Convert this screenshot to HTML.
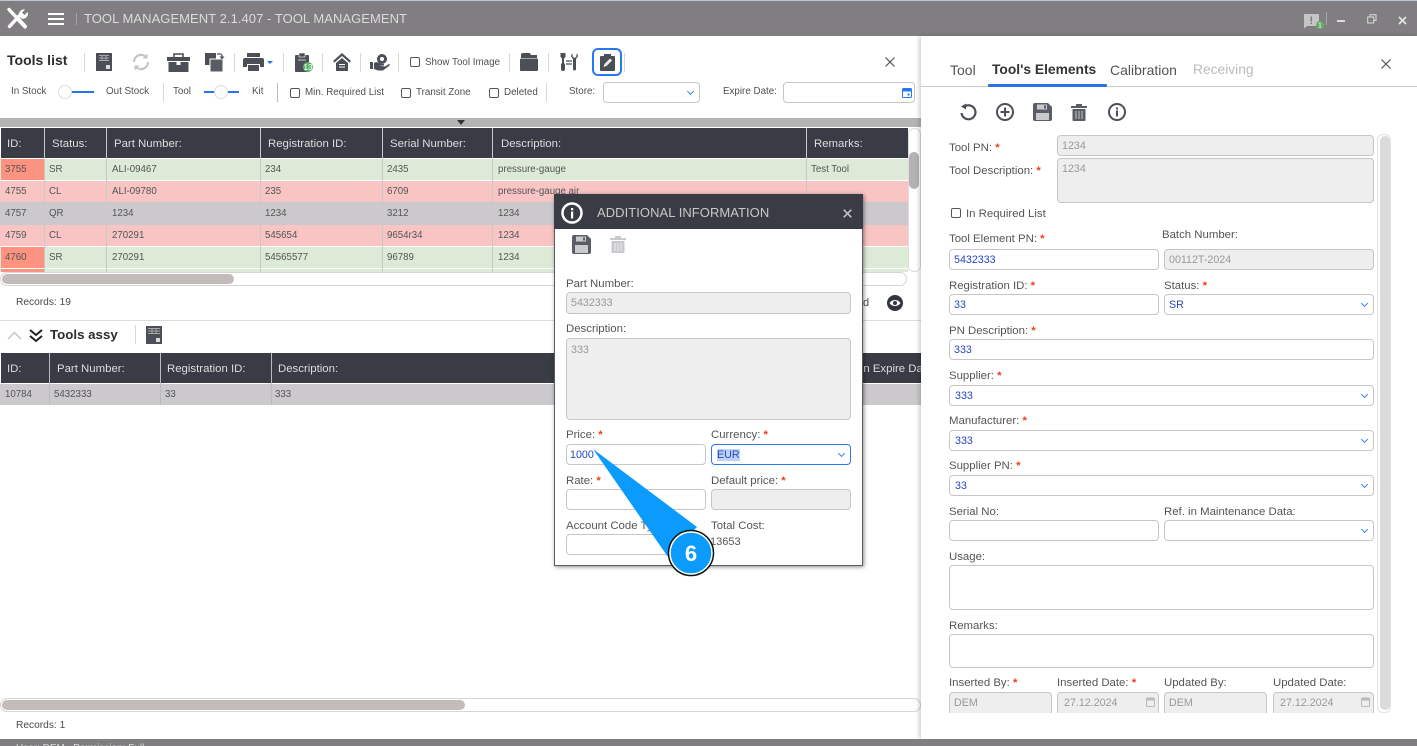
<!DOCTYPE html>
<html><head><meta charset="utf-8"><title>Tool Management</title>
<style>
html,body{margin:0;padding:0;width:1417px;height:746px;overflow:hidden;background:#fff}
body{font-family:"Liberation Sans",sans-serif;font-size:11px;color:#4a4a4a;position:relative}
div,span,svg{box-sizing:border-box}
.a{position:absolute}
.t{position:absolute;line-height:14px;white-space:nowrap}
.tb{font-size:9.800px;color:#505050}
.l{font-size:11.400px;color:#555;margin-top:1px}
.l b,.s{color:#f5391c;font-weight:bold}
.f{position:absolute;background:#fff;border:1px solid #c9c5c7;border-radius:4px;font-size:10.700px;color:#2646c4;padding:1px 4px 0;line-height:19px;white-space:nowrap}
.d{background:#eee;color:#999}
.c:after{content:"";position:absolute;right:6px;top:6px;width:4px;height:4px;border-right:1.500px solid #3b82f0;border-bottom:1.500px solid #3b82f0;transform:rotate(45deg)}
.sep{position:absolute;width:1px;background:#d8d8d8}
.cb{position:absolute;width:10px;height:10px;border:1.300px solid #555;border-radius:2px;background:#fff}
.h{position:absolute;background:#393c45;color:#ddd;font-size:11.400px}
.h span{position:absolute;line-height:14px;white-space:nowrap;margin-top:1px}
.r span{position:absolute;line-height:14px;white-space:nowrap}
.r{position:absolute;left:0;font-size:9.700px;color:#555}
.vl{position:absolute;width:1px}
svg{position:absolute;overflow:visible}
</style></head><body>

<!-- title bar -->
<div class="a" style="left:0;top:0;width:1417px;height:36px;background:#807e80;border-top:1px solid #b9c8d8"></div>
<svg style="left:6px;top:8px" width="22" height="22" viewBox="0 0 22 22"><path d="M3 1.500 L11 10 M14 7 L3.500 18.500" stroke="#fff" stroke-width="3.400" stroke-linecap="round" fill="none"/><path d="M13 6.500a5 5 0 0 1 6-5l-3 3 2.500 2.500 3-3a5 5 0 0 1-6.500 6.500z" fill="#fff"/><path d="M12 11l7 7.500" stroke="#fff" stroke-width="4" stroke-linecap="round"/></svg>
<div class="a" style="left:48px;top:13px;width:16px;height:2px;background:#fff"></div>
<div class="a" style="left:48px;top:18px;width:16px;height:2px;background:#fff"></div>
<div class="a" style="left:48px;top:23px;width:16px;height:2px;background:#fff"></div>
<div class="a" style="left:76px;top:13px;width:1px;height:12px;background:#a5a3a5"></div>
<div class="t" style="left:84px;top:12px;font-size:13px;color:#dcdcdc;letter-spacing:.05px">TOOL MANAGEMENT 2.1.407 - TOOL MANAGEMENT</div>
<svg style="left:1302px;top:13px" width="24" height="17" viewBox="0 0 24 17"><path d="M2 1h14a1 1 0 0 1 1 1v10a1 1 0 0 1-1 1H5l-3 2.500z" fill="#c6c5c6"/><rect x="8.500" y="3.500" width="1.500" height="5" fill="#807e80"/><rect x="8.500" y="9.500" width="1.500" height="1.500" fill="#807e80"/><circle cx="18" cy="12" r="4" fill="#6aa96a"/><text x="18" y="14.500" font-size="7" fill="#fff" text-anchor="middle" font-family="Liberation Sans">1</text></svg>
<div class="a" style="left:1326px;top:12px;width:1px;height:13px;background:#a5a3a5"></div>
<div class="a" style="left:1337px;top:20px;width:8px;height:2px;background:#dcdcdc"></div>
<svg style="left:1367px;top:14px" width="10" height="10" viewBox="0 0 10 10"><path d="M3 2.500V.7h6v5.800H7M.7 3h6v6h-6z" fill="none" stroke="#dcdcdc" stroke-width="1"/></svg>
<svg style="left:1398px;top:16px" width="9" height="9" viewBox="0 0 9 9"><path d="M1 1l7 7M8 1l-7 7" stroke="#e6e6e6" stroke-width="1.600"/></svg>

<!-- left panel -->
<div class="a" style="left:0;top:36px;width:921px;height:703px;overflow:hidden;background:#fff">
<div class="a" style="left:0;top:-36px;width:921px;height:746px">

<div class="t" style="left:7px;top:53px;font-size:14px;font-weight:bold;color:#2c2c2c">Tools list</div>
<div class="sep" style="left:84px;top:53px;height:19px"></div>
<svg style="left:96px;top:53px" width="16" height="18" viewBox="0 0 16 18"><rect width="16" height="18" fill="#4c4f57"/><path d="M3 2.500h10M3 5h10M3 7.500h10M6 2v6M10 2v6" stroke="#aaa" stroke-width="1"/><rect x="10" y="12" width="4" height="4" fill="#ddd"/></svg>
<svg style="left:131px;top:52px" width="20" height="20" viewBox="0 0 20 20"><path d="M3 10a7 7 0 0 1 12-5M17 10a7 7 0 0 1-12 5" fill="none" stroke="#c4c4c4" stroke-width="2.200"/><path d="M16.500 1.500v5h-5zM3.500 18.500v-5h5z" fill="#c4c4c4"/></svg>
<svg style="left:167px;top:53px" width="23" height="19" viewBox="0 0 23 19"><path d="M7 4V1h9v3" fill="none" stroke="#4c4f57" stroke-width="1.600"/><rect y="4" width="23" height="4" fill="#4c4f57"/><rect x="1.500" y="9" width="20" height="10" fill="#4c4f57"/><rect x="9.500" y="8" width="4" height="4" fill="#fff"/></svg>
<svg style="left:205px;top:52px" width="20" height="20" viewBox="0 0 20 20"><rect y="1" width="11" height="12" fill="#4c4f57"/><rect x="5" y="7" width="13" height="13" fill="#5a5d65" stroke="#fff"/><path d="M12 2h3a2 2 0 0 1 2 2v1" fill="none" stroke="#4c4f57" stroke-width="1.300"/><path d="M14.500 4.500h5l-2.500 3z" fill="#4c4f57"/></svg>
<div class="sep" style="left:234px;top:53px;height:19px"></div>
<svg style="left:243px;top:53px" width="32" height="19" viewBox="0 0 32 19"><rect x="4" y="0" width="13" height="4" fill="#4c4f57"/><path d="M2 5h17a2 2 0 0 1 2 2v7h-4v-3H4v3H0V7a2 2 0 0 1 2-2z" fill="#4c4f57"/><rect x="5" y="12" width="11" height="6" fill="#4c4f57"/><path d="M24 8h6l-3 3z" fill="#2a72e8"/></svg>
<div class="sep" style="left:283px;top:53px;height:19px"></div>
<svg style="left:295px;top:52px" width="20" height="20" viewBox="0 0 20 20"><rect y="3" width="14" height="17" rx="1" fill="#4c4f57"/><rect x="4" y="1" width="6" height="4" fill="#4c4f57" stroke="#fff" stroke-width=".6"/><rect x="3" y="7" width="8" height="2" fill="#8a8c92"/><circle cx="13" cy="15" r="5" fill="#5cb56a"/><text x="13" y="18" font-size="8" fill="#fff" text-anchor="middle" font-family="Liberation Sans">13</text></svg>
<div class="sep" style="left:322px;top:53px;height:19px"></div>
<svg style="left:333px;top:53px" width="18" height="18" viewBox="0 0 18 18"><path d="M9 0L0 8l1.500 1.500L9 3l7.500 6.500L18 8z" fill="#4c4f57"/><path d="M3 10l6-5 6 5v8H3z" fill="#4c4f57"/><path d="M6 11.500h6M6 14h6" stroke="#fff"/></svg>
<div class="sep" style="left:360px;top:53px;height:19px"></div>
<svg style="left:370px;top:53px" width="20" height="18" viewBox="0 0 20 18"><circle cx="12" cy="6" r="5" fill="#4c4f57"/><circle cx="12" cy="6" r="2" fill="#fff"/><rect x="0" y="9" width="3" height="7" fill="#4c4f57"/><path d="M4 10c3-2 5 0 7 1h3v1.500H9l6 1 4-2.500c1 0 1 1 0 2l-6 4.500H8l-4-1.500z" fill="#4c4f57"/></svg>
<div class="sep" style="left:398px;top:53px;height:19px"></div>
<div class="cb" style="left:410px;top:57px"></div>
<div class="t tb" style="left:425px;top:56px">Show Tool Image</div>
<div class="sep" style="left:509px;top:53px;height:19px"></div>
<svg style="left:520px;top:53px" width="18" height="18" viewBox="0 0 18 18"><path d="M3 0h7l1 2h6v3H1V2a2 2 0 0 1 2-2z" fill="#4c4f57"/><path d="M1 5.500h16a1 1 0 0 1 1 1V17a1 1 0 0 1-1 1H1a1 1 0 0 1-1-1V6.500a1 1 0 0 1 1-1z" fill="#4c4f57"/></svg>
<div class="sep" style="left:548px;top:53px;height:19px"></div>
<svg style="left:559px;top:52px" width="20" height="20" viewBox="0 0 20 20"><path d="M1.500 1v4l1.500 1.500V11l-1 1v5a2 2 0 0 0 4 0v-5l-1-1V6.500L6.500 5V1" fill="#4c4f57"/><path d="M13.500 1.500v3l2 1.500 2-1.500v-3a3.500 3.500 0 0 1 1.500 3L17 7v10a1.500 1.500 0 0 1-3 0V7l-2-2.500a3.500 3.500 0 0 1 1.500-3z" fill="#4c4f57"/><path d="M7 9h6M7 12h6" stroke="#4c4f57" stroke-width="1.200"/></svg>
<div class="a" style="left:592px;top:48px;width:30px;height:28px;border:2px solid #2a78f0;border-radius:6px;background:#fff"></div>
<svg style="left:600px;top:54px" width="15" height="17" viewBox="0 0 15 17"><rect y="2" width="15" height="15" rx="1" fill="#4c4f57"/><rect x="4" y="0" width="7" height="4" fill="#4c4f57"/><path d="M3.500 13l1-3 5.500-5.500 2 2L6.500 12z" fill="#eee"/></svg>
<div class="sep" style="left:624px;top:53px;height:19px"></div>
<svg style="left:885px;top:57px" width="10" height="10" viewBox="0 0 10 10"><path d="M.5.500l9 9M9.500.500l-9 9" stroke="#555" stroke-width="1.200"/></svg>

<div class="t tb" style="left:11px;top:85px">In Stock</div>
<div class="a" style="left:65px;top:91px;width:29px;height:2px;background:#2a72e8"></div>
<div class="a" style="left:58px;top:85px;width:14px;height:14px;border-radius:50%;background:#fff;border:1px solid #ddd"></div>
<div class="t tb" style="left:106px;top:85px">Out Stock</div>
<div class="sep" style="left:163px;top:83px;height:19px"></div>
<div class="t tb" style="left:173px;top:85px">Tool</div>
<div class="a" style="left:204px;top:91px;width:35px;height:2px;background:#2a72e8"></div>
<div class="a" style="left:214px;top:85px;width:14px;height:14px;border-radius:50%;background:#fff;border:1px solid #ddd"></div>
<div class="t tb" style="left:252px;top:85px">Kit</div>
<div class="sep" style="left:277px;top:83px;height:19px;background:#bbb"></div>
<div class="cb" style="left:290px;top:88px"></div>
<div class="t tb" style="left:305px;top:86px">Min. Required List</div>
<div class="cb" style="left:401px;top:88px"></div>
<div class="t tb" style="left:416px;top:86px">Transit Zone</div>
<div class="cb" style="left:489px;top:88px"></div>
<div class="t tb" style="left:504px;top:86px">Deleted</div>
<div class="sep" style="left:546px;top:83px;height:19px"></div>
<div class="t tb" style="left:569px;top:85px">Store:</div>
<div class="f c" style="left:603px;top:82px;width:97px;height:21px"></div>
<div class="t tb" style="left:723px;top:85px">Expire Date:</div>
<div class="f" style="left:783px;top:82px;width:132px;height:21px"></div>
<svg style="left:902px;top:87px" width="10" height="11" viewBox="0 0 10 11"><rect x=".5" y="1.500" width="9" height="9" rx="1" fill="none" stroke="#2a78f0"/><rect x=".5" y="1.500" width="9" height="3" fill="#2a78f0"/><rect x="5.500" y="6.500" width="2" height="2" fill="#2a78f0"/></svg>

<div class="a" style="left:0;top:118px;width:921px;height:9px;background:#b4b4b4"></div>
<svg style="left:457px;top:120px" width="8" height="5" viewBox="0 0 8 5"><path d="M0 0h8L4 5z" fill="#333"/></svg>

<!-- grid 1 -->
<div class="h" style="left:1px;top:128px;width:907px;height:30px">
<span style="left:6px;top:8px">ID:</span><span style="left:51px;top:8px">Status:</span><span style="left:113px;top:8px">Part Number:</span><span style="left:267px;top:8px">Registration ID:</span><span style="left:389px;top:8px">Serial Number:</span><span style="left:500px;top:8px">Description:</span><span style="left:813px;top:8px">Remarks:</span></div>
<div class="r" style="top:159px;width:908px;height:21px;background:#deead8"><span style="left:49px;top:4px">SR</span><span style="left:112px;top:4px">ALI-09467</span><span style="left:265px;top:4px">234</span><span style="left:387px;top:4px">2435</span><span style="left:498px;top:4px">pressure-gauge</span><span style="left:811px;top:4px">Test Tool</span></div>
<div class="r" style="top:181px;width:908px;height:21px;background:#f8c4c4"><span style="left:49px;top:4px">CL</span><span style="left:112px;top:4px">ALI-09780</span><span style="left:265px;top:4px">235</span><span style="left:387px;top:4px">6709</span><span style="left:498px;top:4px">pressure-gauge air</span></div>
<div class="r" style="top:202px;width:908px;height:23px;background:#cbc9cc"><span style="left:5px;top:5px">4757</span><span style="left:49px;top:5px">QR</span><span style="left:112px;top:5px">1234</span><span style="left:265px;top:5px">1234</span><span style="left:387px;top:5px">3212</span><span style="left:498px;top:5px">1234</span></div>
<div class="r" style="top:225px;width:908px;height:21px;background:#f8c4c4"><span style="left:5px;top:4px">4759</span><span style="left:49px;top:4px">CL</span><span style="left:112px;top:4px">270291</span><span style="left:265px;top:4px">545654</span><span style="left:387px;top:4px">9654r34</span><span style="left:498px;top:4px">1234</span></div>
<div class="r" style="top:247px;width:908px;height:21px;background:#deead8"><span style="left:49px;top:4px">SR</span><span style="left:112px;top:4px">270291</span><span style="left:265px;top:4px">54565577</span><span style="left:387px;top:4px">96789</span><span style="left:498px;top:4px">1234</span></div>
<div class="r" style="top:269px;width:908px;height:3px;background:#deead8"></div>
<div class="r" style="top:159px;left:1px;width:43px;height:21px;background:#fc9280;color:#555"><span style="left:4px;top:4px">3755</span></div>
<div class="r" style="top:181px;left:1px;width:43px;height:21px;background:#f8c4c4"><span style="left:4px;top:4px">4755</span></div>
<div class="r" style="top:247px;left:1px;width:43px;height:21px;background:#fc9280"><span style="left:4px;top:4px">4760</span></div>
<div class="r" style="top:269px;left:1px;width:43px;height:3px;background:#fc9280"></div>
<div class="vl" style="left:44px;top:128px;height:144px;background:#c9c9c9"></div>
<div class="vl" style="left:106px;top:128px;height:144px;background:#c9c9c9"></div>
<div class="vl" style="left:260px;top:128px;height:144px;background:#c9c9c9"></div>
<div class="vl" style="left:382px;top:128px;height:144px;background:#c9c9c9"></div>
<div class="vl" style="left:492px;top:128px;height:144px;background:#c9c9c9"></div>
<div class="vl" style="left:806px;top:128px;height:144px;background:#c9c9c9"></div>
<div class="a" style="left:908px;top:128px;width:13px;height:144px;border:1px solid #ddd;border-radius:6px;background:#fff"></div>
<div class="a" style="left:909px;top:152px;width:10px;height:37px;border-radius:5px;background:#b4b2b4"></div>
<div class="a" style="left:0;top:272px;width:907px;height:14px;border:1px solid #d5d5d5;border-radius:7px;background:#fff"></div>
<div class="a" style="left:2px;top:274px;width:232px;height:10px;border-radius:5px;background:#c4bcba"></div>
<div class="t" style="left:16px;top:296px;font-size:10.200px">Records: 19</div>
<div class="t" style="left:863px;top:296px;font-size:11px">d</div>
<svg style="left:887px;top:295px" width="16" height="16" viewBox="0 0 16 16"><circle cx="8" cy="8" r="8" fill="#33363d"/><path d="M2.500 8c2.500-4 8.500-4 11 0-2.500 4-8.500 4-11 0z" fill="#fff"/><circle cx="8" cy="8" r="2" fill="#33363d"/></svg>
<div class="a" style="left:0;top:320px;width:921px;height:1px;background:#ddd"></div>
<svg style="left:7px;top:331px" width="15" height="9" viewBox="0 0 15 9"><path d="M1 8l6.500-6.500L14 8" fill="none" stroke="#ccc" stroke-width="1.600"/></svg>
<svg style="left:29px;top:329px" width="14" height="14" viewBox="0 0 14 14"><path d="M1 1l6 5 6-5M1 7l6 5 6-5" fill="none" stroke="#222" stroke-width="2"/></svg>
<div class="t" style="left:50px;top:328px;font-size:13.300px;font-weight:bold;color:#2c2c2c">Tools assy</div>
<div class="sep" style="left:135px;top:325px;height:19px"></div>
<svg style="left:146px;top:326px" width="16" height="18" viewBox="0 0 16 18"><rect width="16" height="18" fill="#4c4f57"/><path d="M2 2.500h12M2 5h12M2 7.500h12M6 2v6M10 2v6" stroke="#aaa"/><rect x="10" y="12" width="4" height="4" fill="#ddd"/></svg>

<!-- grid 2 -->
<div class="h" style="left:1px;top:353px;width:920px;height:30px"><span style="left:6px;top:8px">ID:</span><span style="left:56px;top:8px">Part Number:</span><span style="left:166px;top:8px">Registration ID:</span><span style="left:277px;top:8px">Description:</span><span style="left:856px;top:8px">on Expire Date:</span></div>
<div class="r" style="top:384px;width:921px;height:21px;background:#cbc9cc"><span style="left:5px;top:4px">10784</span><span style="left:54px;top:4px">5432333</span><span style="left:165px;top:4px">33</span><span style="left:275px;top:4px">333</span></div>
<div class="vl" style="left:49px;top:353px;height:52px;background:#bbb"></div>
<div class="vl" style="left:160px;top:353px;height:52px;background:#bbb"></div>
<div class="vl" style="left:271px;top:353px;height:52px;background:#bbb"></div>

<div class="a" style="left:0;top:698px;width:921px;height:14px;border:1px solid #d5d5d5;border-radius:7px;background:#fff"></div>
<div class="a" style="left:2px;top:700px;width:463px;height:10px;border-radius:5px;background:#c4bcba"></div>
<div class="t" style="left:16px;top:719px;font-size:10.200px">Records: 1</div>

<!-- popup -->
<div class="a" style="left:554px;top:194px;width:309px;height:372px;background:#fff;border:1px solid #5a5c62;box-shadow:1px 1px 4px rgba(0,0,0,.45)"></div>
<div class="a" style="left:554px;top:194px;width:309px;height:35px;background:#393c45"></div>
<svg style="left:561px;top:202px" width="22" height="22" viewBox="0 0 22 22"><circle cx="11" cy="11" r="9.500" fill="#393c45" stroke="#fff" stroke-width="2.500"/><rect x="10" y="9.500" width="2.200" height="7" fill="#fff"/><rect x="10" y="6" width="2.200" height="2.200" fill="#fff"/></svg>
<div class="t" style="left:597px;top:206px;font-size:13px;color:#c8c8c8;letter-spacing:.05px">ADDITIONAL INFORMATION</div>
<svg style="left:843px;top:209px" width="9" height="9" viewBox="0 0 9 9"><path d="M.7.700l7.600 7.600M8.300.700L.7 8.300" stroke="#c4c4c4" stroke-width="1.500"/></svg>
<svg style="left:572px;top:235px" width="19" height="19" viewBox="0 0 19 19"><path d="M2 0h13l4 4v13a2 2 0 0 1-2 2H2a2 2 0 0 1-2-2V2a2 2 0 0 1 2-2z" fill="#5a5d65"/><rect x="4" y="1.500" width="10" height="5" fill="#c9cacd"/><rect x="11" y="2.500" width="2" height="3" fill="#5a5d65"/><rect x="3" y="10" width="13" height="8" fill="#c9cacd"/></svg>
<svg style="left:610px;top:235px" width="16" height="18" viewBox="0 0 16 18"><path d="M0 3h16v2H0zM5 1h6v2H5zM1.500 6h13v11a1 1 0 0 1-1 1h-11a1 1 0 0 1-1-1z" fill="#c8c9cc"/><path d="M5 8v8M8 8v8M11 8v8" stroke="#eee"/></svg>
<div class="t l" style="left:566px;top:276px">Part Number:</div>
<div class="f d" style="left:566px;top:292px;width:285px;height:22px">5432333</div>
<div class="t l" style="left:566px;top:321px">Description:</div>
<div class="f d" style="left:566px;top:338px;width:285px;height:82px;line-height:20px">333</div>
<div class="t l" style="left:566px;top:427px">Price: <b>*</b></div>
<div class="f" style="left:566px;top:444px;width:140px;height:21px;padding-left:3px">1000</div>
<div class="t l" style="left:711px;top:427px">Currency: <b>*</b></div>
<div class="f c" style="left:711px;top:444px;width:140px;height:21px;border-color:#2a78f0;padding-left:5px"><span style="background:#bcd3f5">EUR</span></div>
<div class="t l" style="left:566px;top:473px">Rate: <b>*</b></div>
<div class="f" style="left:566px;top:489px;width:140px;height:21px"></div>
<div class="t l" style="left:711px;top:473px">Default price: <b>*</b></div>
<div class="f d" style="left:711px;top:489px;width:140px;height:21px"></div>
<div class="t l" style="left:566px;top:518px">Account Code Type:</div>
<div class="f" style="left:566px;top:534px;width:140px;height:21px"></div>
<div class="t l" style="left:711px;top:518px">Total Cost:</div>
<div class="t" style="left:710px;top:535px;font-size:11px;color:#555">13653</div>

<!-- callout -->
<svg style="left:0;top:0" width="921" height="746" viewBox="0 0 921 746"><path d="M593 449L697 527L668 557Z" fill="#0a9bfd"/><circle cx="691" cy="553" r="22.500" fill="#0a9bfd" stroke="#111" stroke-width="1.500"/><circle cx="691" cy="553" r="21" fill="none" stroke="#fff" stroke-width="1.500"/><text x="691" y="561" font-size="22" font-weight="bold" fill="#fff" text-anchor="middle" font-family="Liberation Sans">6</text></svg>
</div></div>

<!-- right panel -->
<div class="a" style="left:921px;top:36px;width:496px;height:703px;background:#fff;box-shadow:-2px 0 4px rgba(0,0,0,.18)"></div>
<div class="t" style="left:950px;top:63px;font-size:14px;color:#555">Tool</div>
<div class="t" style="left:992px;top:63px;font-size:13.800px;font-weight:bold;color:#333">Tool's Elements</div>
<div class="t" style="left:1110px;top:63px;font-size:14px;color:#555">Calibration</div>
<div class="t" style="left:1193px;top:63px;font-size:13.800px;color:#bbb">Receiving</div>
<svg style="left:1381px;top:59px" width="10" height="10" viewBox="0 0 10 10"><path d="M.5.500l9 9M9.500.500l-9 9" stroke="#555" stroke-width="1.200"/></svg>
<div class="a" style="left:921px;top:86px;width:496px;height:1px;background:#ccc"></div>
<div class="a" style="left:988px;top:84px;width:119px;height:3px;background:#2a72e8;border-radius:1px"></div>

<svg style="left:959px;top:103px" width="18" height="18" viewBox="0 0 18 18"><path d="M5.500 3.500A7 7 0 1 1 2.500 10" fill="none" stroke="#4c4f57" stroke-width="2.200"/><path d="M7 .5v6L2 3.500z" fill="#4c4f57"/></svg>
<svg style="left:996px;top:103px" width="18" height="18" viewBox="0 0 18 18"><circle cx="9" cy="9" r="8" fill="none" stroke="#4c4f57" stroke-width="2"/><path d="M4.500 9h9M9 4.500v9" stroke="#4c4f57" stroke-width="2"/></svg>
<svg style="left:1033px;top:103px" width="19" height="18" viewBox="0 0 19 18"><path d="M2 0h13l4 4v12a2 2 0 0 1-2 2H2a2 2 0 0 1-2-2V2a2 2 0 0 1 2-2z" fill="#5a5d65"/><rect x="4" y="1.500" width="10" height="5" fill="#c9cacd"/><rect x="11" y="2.500" width="2" height="3" fill="#5a5d65"/><rect x="3" y="10" width="13" height="7" fill="#c9cacd"/></svg>
<svg style="left:1071px;top:103px" width="16" height="18" viewBox="0 0 16 18"><path d="M0 3h16v2H0zM5 1h6v2H5zM1.500 6h13v11a1 1 0 0 1-1 1h-11a1 1 0 0 1-1-1z" fill="#5a5d65"/><path d="M5 8v8M8 8v8M11 8v8" stroke="#ccc"/></svg>
<svg style="left:1108px;top:103px" width="18" height="18" viewBox="0 0 18 18"><circle cx="9" cy="9" r="8" fill="none" stroke="#4c4f57" stroke-width="2"/><rect x="8" y="7.500" width="2" height="6" fill="#4c4f57"/><rect x="8" y="4.500" width="2" height="2" fill="#4c4f57"/></svg>

<div class="t l" style="left:949px;top:140px">Tool PN: <b>*</b></div>
<div class="f d" style="left:1057px;top:135px;width:317px;height:21px">1234</div>
<div class="t l" style="left:949px;top:163px">Tool Description: <b>*</b></div>
<div class="f d" style="left:1057px;top:158px;width:317px;height:45px">1234</div>
<div class="cb" style="left:951px;top:208px"></div>
<div class="t l" style="left:966px;top:206px">In Required List</div>
<div class="t l" style="left:949px;top:231px">Tool Element PN: <b>*</b></div>
<div class="t l" style="left:1162px;top:227px">Batch Number:</div>
<div class="f" style="left:949px;top:249px;width:210px;height:21px">5432333</div>
<div class="f d" style="left:1164px;top:249px;width:210px;height:21px">00112T-2024</div>
<div class="t l" style="left:949px;top:278px">Registration ID: <b>*</b></div>
<div class="t l" style="left:1164px;top:278px">Status: <b>*</b></div>
<div class="f" style="left:949px;top:294px;width:210px;height:21px">33</div>
<div class="f c" style="left:1164px;top:294px;width:210px;height:21px">SR</div>
<div class="t l" style="left:949px;top:323px">PN Description: <b>*</b></div>
<div class="f" style="left:949px;top:339px;width:425px;height:21px">333</div>
<div class="t l" style="left:949px;top:368px">Supplier: <b>*</b></div>
<div class="f c" style="left:949px;top:385px;width:425px;height:21px;padding-left:5px">333</div>
<div class="t l" style="left:949px;top:413px">Manufacturer: <b>*</b></div>
<div class="f c" style="left:949px;top:430px;width:425px;height:21px;padding-left:5px">333</div>
<div class="t l" style="left:949px;top:458px">Supplier PN: <b>*</b></div>
<div class="f c" style="left:949px;top:475px;width:425px;height:21px;padding-left:5px">33</div>
<div class="t l" style="left:949px;top:504px">Serial No:</div>
<div class="t l" style="left:1164px;top:504px">Ref. in Maintenance Data:</div>
<div class="f" style="left:949px;top:520px;width:210px;height:21px"></div>
<div class="f c" style="left:1164px;top:520px;width:210px;height:21px"></div>
<div class="t l" style="left:949px;top:549px">Usage:</div>
<div class="f" style="left:949px;top:565px;width:425px;height:45px"></div>
<div class="t l" style="left:949px;top:618px">Remarks:</div>
<div class="f" style="left:949px;top:634px;width:425px;height:34px"></div>
<div class="t l" style="left:949px;top:675px">Inserted By: <b>*</b></div>
<div class="t l" style="left:1057px;top:675px">Inserted Date: <b>*</b></div>
<div class="t l" style="left:1164px;top:675px">Updated By:</div>
<div class="t l" style="left:1273px;top:675px">Updated Date:</div>
<div class="a" style="left:949px;top:692px;width:425px;height:21px;overflow:hidden">
<div class="f d" style="left:0;top:0;width:103px;height:24px">DEM</div>
<div class="f d" style="left:108px;top:0;width:102px;height:24px;padding-left:6px">27.12.2024</div>
<div class="f d" style="left:215px;top:0;width:103px;height:24px">DEM</div>
<div class="f d" style="left:324px;top:0;width:101px;height:24px;padding-left:6px">27.12.2024</div>
<svg style="left:197px;top:5px" width="9" height="10" viewBox="0 0 9 10"><rect x=".5" y="1" width="8" height="8.500" rx="1" fill="none" stroke="#bbb"/><rect x=".5" y="1" width="8" height="2.500" fill="#bbb"/></svg>
<svg style="left:412px;top:5px" width="9" height="10" viewBox="0 0 9 10"><rect x=".5" y="1" width="8" height="8.500" rx="1" fill="none" stroke="#bbb"/><rect x=".5" y="1" width="8" height="2.500" fill="#bbb"/></svg>
</div>
<div class="a" style="left:1377px;top:134px;width:14px;height:579px;border:1px solid #e2e2e2;border-radius:6px;background:#fff"></div>
<div class="a" style="left:1380px;top:136px;width:10px;height:574px;border-radius:5px;background:#dcdadc"></div>

<!-- footer -->
<div class="a" style="left:0;top:739px;width:1417px;height:7px;background:#807e80;overflow:hidden"><div class="t" style="left:16px;top:3px;font-size:10px;color:#ddd">User: DEM &nbsp; Permission: Full</div></div>
</body></html>
